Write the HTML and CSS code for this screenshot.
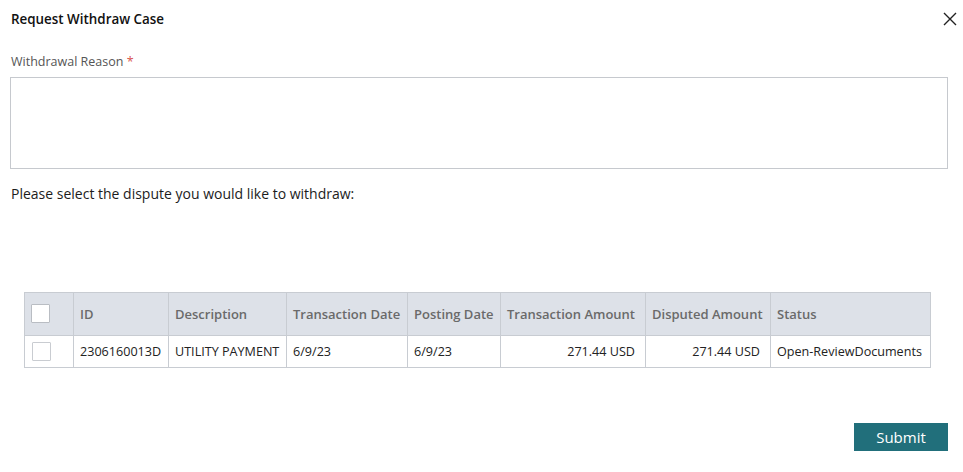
FILE: index.html
```html
<!DOCTYPE html>
<html>
<head>
  <title>Request Withdraw Case</title>
  <link rel="stylesheet" href="styles.css">
</head>
<body>
  <div class="dialog">
    <div class="dialog-header">
      <h2>Request Withdraw Case</h2>
      <button class="close-btn" aria-label="Close">
        <svg width="14" height="14" viewBox="0 0 14 14">
          <path d="M1 1 L13 13 M13 1 L1 13" stroke="#222" stroke-width="1.4" fill="none"/>
        </svg>
      </button>
    </div>

    <label class="field-label" for="reason">Withdrawal Reason <span class="req">*</span></label>
    <textarea id="reason"></textarea>

    <p class="note">Please select the dispute you would like to withdraw:</p>

    <table class="disputes">
      <colgroup>
        <col class="c-check">
        <col class="c-id">
        <col class="c-desc">
        <col class="c-tdate">
        <col class="c-pdate">
        <col class="c-tamt">
        <col class="c-damt">
        <col class="c-status">
      </colgroup>
      <thead>
        <tr>
          <th><span class="box"></span></th>
          <th>ID</th>
          <th>Description</th>
          <th>Transaction Date</th>
          <th>Posting Date</th>
          <th>Transaction Amount</th>
          <th>Disputed Amount</th>
          <th>Status</th>
        </tr>
      </thead>
      <tbody>
        <tr>
          <td><span class="box light"></span></td>
          <td>2306160013D</td>
          <td>UTILITY PAYMENT</td>
          <td>6/9/23</td>
          <td>6/9/23</td>
          <td class="num">271.44 USD</td>
          <td class="num">271.44 USD</td>
          <td>Open-ReviewDocuments</td>
        </tr>
      </tbody>
    </table>

    <div class="actions">
      <button id="submitBtn">Submit</button>
    </div>
  </div>
</body>
</html>
```

FILE: styles.css
```css
body {
  font-family: "Open Sans", Arial, sans-serif;
  background-color: #fff;
  color: #222;
  margin: 0;
}

.dialog {
  padding: 10px 15px 0 10px;
}

.dialog-header {
  display: flex;
  justify-content: space-between;
  align-items: center;
  height: 18px;
}

h2 {
  margin: 0 0 0 1px;
  font-size: 13.4px;
  font-weight: 600;
  color: #111;
}

.close-btn {
  border: none;
  background: none;
  padding: 0;
  margin-right: -9px;
  width: 14px;
  height: 14px;
  cursor: pointer;
  display: flex;
}

.field-label {
  display: block;
  margin: 26px 0 0 1px;
  font-size: 12.5px;
  line-height: 16px;
  color: #555;
}

.req {
  color: #d9534f;
}

textarea {
  display: block;
  width: 100%;
  height: 92px;
  margin-top: 7px;
  box-sizing: border-box;
  border: 1px solid #c6c9ce;
  border-radius: 0;
  resize: none;
  font-family: inherit;
  font-size: 13px;
  padding: 6px;
}

.note {
  margin: 16px 0 0 1px;
  font-size: 14px;
  line-height: 18px;
  font-weight: 500;
  color: #1c1c1c;
}

table.disputes {
  margin: 89px 0 0 14px;
  border-collapse: collapse;
  table-layout: fixed;
  width: 906px;
  font-size: 13px;
}

.c-check { width: 49px; }
.c-id { width: 95px; }
.c-desc { width: 118px; }
.c-tdate { width: 121px; }
.c-pdate { width: 93px; }
.c-tamt { width: 145px; }
.c-damt { width: 125px; }
.c-status { width: 160px; }

.disputes th,
.disputes td {
  border: 1px solid #c8ccd2;
  padding: 0 6px;
  text-align: left;
  white-space: nowrap;
}

.disputes th {
  background-color: #dde1e8;
  color: #6a6a6a;
  font-weight: 600;
  height: 41px;
  padding-bottom: 1px;
}

.disputes td {
  height: 30px;
  padding-bottom: 1px;
  font-size: 12.6px;
  color: #222;
}

.disputes td.num {
  text-align: right;
  padding-right: 10px;
}

.box {
  display: block;
  width: 17px;
  height: 17px;
  background-color: #fff;
  border: 1px solid #b9bdc3;
  border-radius: 1px;
}

.box.light {
  border-color: #c9ccd1;
  margin-left: 1px;
}

.actions {
  display: flex;
  justify-content: flex-end;
  margin-top: 55px;
}

#submitBtn {
  width: 94px;
  height: 28px;
  border: none;
  border-radius: 0;
  background-color: #216f7b;
  color: #fff;
  font-family: inherit;
  font-size: 15px;
  cursor: pointer;
}

#submitBtn:hover {
  background-color: #1a5c66;
}
```
